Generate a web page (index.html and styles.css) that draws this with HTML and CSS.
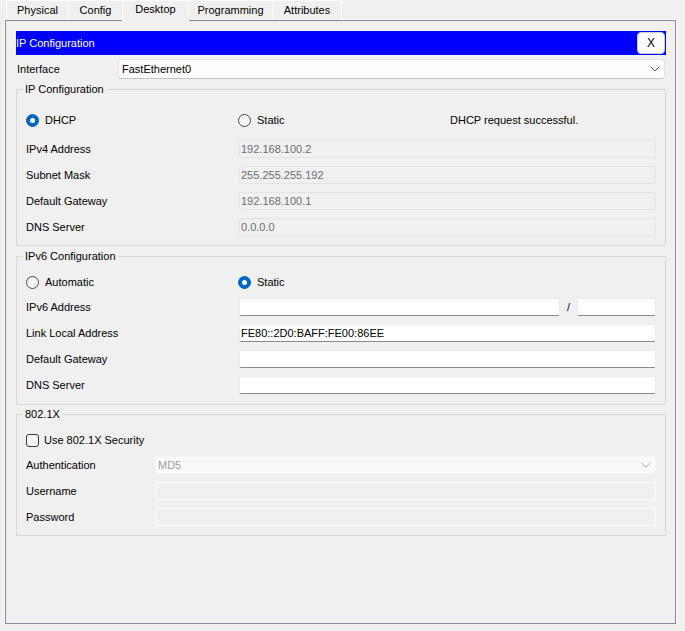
FILE: index.html
```html
<!DOCTYPE html>
<html>
<head>
<meta charset="utf-8">
<title>IP Configuration</title>
<link rel="stylesheet" href="styles.css">
</head>
<body>
<div class="tabs">
  <div class="tab t-physical">Physical</div>
  <div class="tab t-config">Config</div>
  <div class="tab t-desktop active">Desktop</div>
  <div class="tab t-programming">Programming</div>
  <div class="tab t-attributes">Attributes</div>
</div>
<div class="frame">
  <div class="titlebar">
    <span class="title">IP Configuration</span>
    <button class="close">X</button>
  </div>
  <div class="iface-row">
    <span class="iface-label">Interface</span>
    <div class="select">
      <span>FastEthernet0</span>
      <svg class="chev" width="10" height="6" viewBox="0 0 10 6"><polyline points="0.5,0.5 5,5 9.5,0.5" fill="none" stroke="#5c5c5c" stroke-width="1"/></svg>
    </div>
  </div>

  <fieldset class="group g-ipv4">
    <legend>IP Configuration</legend>
    <div class="radio-row">
      <label class="radio"><span class="dot on"></span>DHCP</label>
      <label class="radio"><span class="dot"></span>Static</label>
      <span class="status">DHCP request successful.</span>
    </div>
    <div class="field"><span>IPv4 Address</span><div class="input ro">192.168.100.2</div></div>
    <div class="field"><span>Subnet Mask</span><div class="input ro">255.255.255.192</div></div>
    <div class="field"><span>Default Gateway</span><div class="input ro">192.168.100.1</div></div>
    <div class="field"><span>DNS Server</span><div class="input ro">0.0.0.0</div></div>
  </fieldset>

  <fieldset class="group g-ipv6">
    <legend>IPv6 Configuration</legend>
    <div class="radio-row">
      <label class="radio"><span class="dot"></span>Automatic</label>
      <label class="radio"><span class="dot on"></span>Static</label>
      <span></span>
    </div>
    <div class="field">
      <span>IPv6 Address</span>
      <div class="pair">
        <div class="input edit grow"></div>
        <span class="slash">/</span>
        <div class="input edit prefix"></div>
      </div>
    </div>
    <div class="field"><span>Link Local Address</span><div class="input edit">FE80::2D0:BAFF:FE00:86EE</div></div>
    <div class="field"><span>Default Gateway</span><div class="input edit"></div></div>
    <div class="field"><span>DNS Server</span><div class="input edit"></div></div>
  </fieldset>

  <fieldset class="group g-8021x">
    <legend>802.1X</legend>
    <div class="check-row">
      <label class="check"><span class="box"></span>Use 802.1X Security</label>
    </div>
    <div class="field"><span>Authentication</span>
      <div class="select off">
        <span>MD5</span>
        <svg class="chev" width="10" height="6" viewBox="0 0 10 6"><polyline points="0.5,0.5 5,5 9.5,0.5" fill="none" stroke="#b4b4b4" stroke-width="1"/></svg>
      </div>
    </div>
    <div class="field"><span>Username</span><div class="input off"></div></div>
    <div class="field"><span>Password</span><div class="input off"></div></div>
  </fieldset>
</div>
</body>
</html>
```

FILE: styles.css
```css
* {
  box-sizing: border-box;
}

body {
  margin: 0;
  background: #f0f0f0;
  font-family: "Liberation Sans", Arial, sans-serif;
  font-size: 11px;
  color: #000;
}

/* tabs */
.tabs {
  display: flex;
  height: 20px;
  padding-left: 6px;
  position: relative;
  z-index: 1;
}

.tab {
  height: 20px;
  line-height: 19px;
  text-align: center;
  border: 1px solid #fbfbfb;
  border-bottom: none;
  margin-right: -1px;
  background: #f0f0f0;
}

.t-physical { width: 63px; }
.t-config { width: 55px; }
.t-desktop { width: 67px; }
.t-programming { width: 85px; }
.t-attributes { width: 70px; }

.tab.active {
  height: 21px;
  line-height: 17px;
  background: #f0f0f0;
}

/* frame */
.frame {
  margin-left: 5px;
  width: 671px;
  height: 604px;
  border: 1px solid #8a8a96;
  box-shadow: 0 0 0 1px #fbfbfb;
  padding: 10px 9px 0 10px;
}

.titlebar {
  display: flex;
  align-items: center;
  justify-content: space-between;
  height: 24px;
  background: #0000ff;
  color: #fff;
  padding-right: 1px;
}

.close {
  width: 28px;
  height: 22px;
  background: #fdfdfd;
  border: 1px solid #cfcfcf;
  border-radius: 4px;
  font-family: "Liberation Sans", Arial, sans-serif;
  font-size: 12px;
  color: #000;
  padding: 0;
  line-height: 20px;
}

.iface-row {
  display: flex;
  align-items: center;
  height: 20px;
  margin-top: 4px;
}

.iface-label {
  width: 102px;
  padding-left: 1px;
}

.select {
  flex: 1;
  display: flex;
  align-items: center;
  justify-content: space-between;
  height: 20px;
  margin-right: 1px;
  padding: 0 4px 0 3px;
  background: #fdfdfd;
  border: 1px solid #e3e3e3;
  border-bottom-color: #c4c4c4;
  border-radius: 3px;
}

.select.off {
  height: 18px;
  margin-right: 0;
  padding-left: 2px;
  background: #f9f9f9;
  border-color: #f4f4f4;
  color: #9d9d9d;
}

/* groups */
.group {
  margin: 3px 0 0;
  border: 1px solid #d9d9d9;
  padding: 0 9px 5px 9px;
  min-width: 0;
}

.group legend {
  padding: 0 2px;
  margin-left: -3px;
  line-height: 14px;
  font-size: 11px;
}

.g-ipv4 {
  padding-top: 11px;
}

.g-ipv6 {
  padding-top: 7px;
  padding-bottom: 6px;
}

.g-8021x {
  margin-top: 2px;
  padding-top: 7px;
}

.radio-row {
  display: grid;
  grid-template-columns: 212px 212px 1fr;
  align-items: center;
  height: 26px;
}

.g-ipv4 .radio-row {
  margin-bottom: 3px;
}

.g-ipv6 .radio-row {
  height: 24px;
}

.radio {
  display: flex;
  align-items: center;
  gap: 6px;
}

.dot {
  width: 13px;
  height: 13px;
  border-radius: 50%;
  border: 1px solid #4a4a4a;
  background: #f5f5f5;
}

.dot.on {
  display: grid;
  place-items: center;
  background: #0067c0;
  border-color: #0067c0;
}

.dot.on::after {
  content: "";
  width: 5px;
  height: 5px;
  border-radius: 50%;
  background: #fff;
}

.check-row {
  display: flex;
  align-items: center;
  height: 24px;
}

.check {
  display: flex;
  align-items: center;
  gap: 5px;
}

.box {
  width: 13px;
  height: 13px;
  border: 1px solid #3c3c3c;
  border-radius: 3px;
  background: #f7f7f7;
}

.field {
  display: grid;
  grid-template-columns: 213px 1fr;
  align-items: center;
  height: 26px;
}

.g-8021x .field {
  grid-template-columns: 129px 1fr;
}

.input {
  height: 18px;
  line-height: 16px;
  padding-left: 1px;
  border: 1px solid #e2e2e2;
  border-radius: 2px;
  white-space: nowrap;
}

.input.ro {
  background: #f0f0f0;
  border-color: #e4e4e4;
  color: #6d6d6d;
}

.input.edit {
  background: #fff;
  border-color: #ececec;
  border-bottom-color: #8a8a8a;
  color: #000;
}

.input.off {
  background: #f0f0f0;
  border-color: #fbfbfb;
}

.pair {
  display: flex;
  align-items: center;
}

.pair .grow {
  flex: 1;
}

.slash {
  width: 17px;
  text-align: center;
}

.pair .prefix {
  width: 79px;
}
```
